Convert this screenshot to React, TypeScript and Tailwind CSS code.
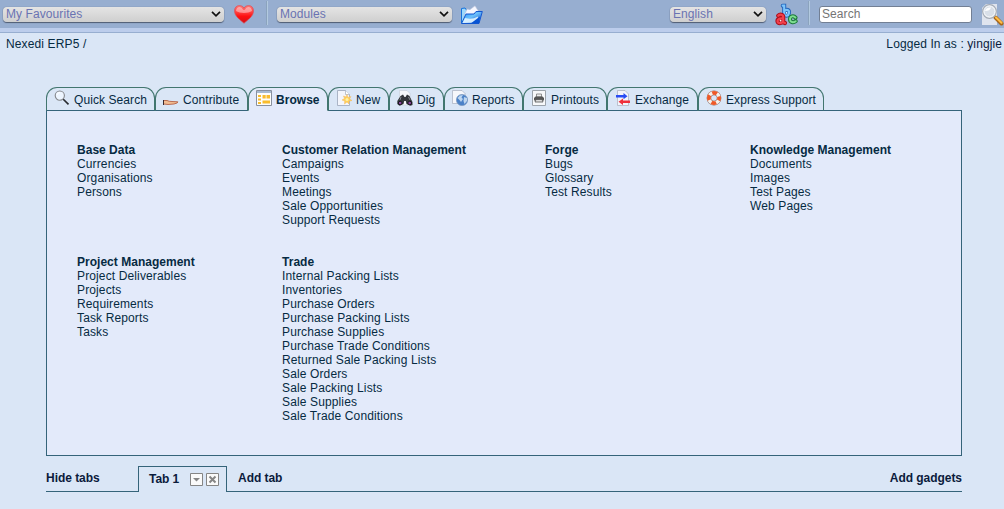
import React from "react";

type Tab = { label: string; width: string; textPad: string; icon: React.ReactNode; active?: boolean };

const Chevron = () => (
  <svg width="10" height="6" viewBox="0 0 10 6" className="shrink-0">
    <path d="M1 .8L5 4.8L9 .8" fill="none" stroke="#111" strokeWidth="1.7" />
  </svg>
);

function Select({ label, className }: { label: string; className: string }) {
  return (
    <div className={`${className} flex h-[15px] shrink-0 items-center justify-between rounded-[4px] bg-gradient-to-b from-[#e4e4e4] to-[#cfcfcf] pr-[3px] pl-[3px] text-[#6a73b2] shadow-[0_1px_1px_#4f5c72,0_0_1px_#5d6a80]`}>
      <span className="leading-[14px]">{label}</span>
      <Chevron />
    </div>
  );
}

const Divider = ({ className }: { className: string }) => (
  <div className={`${className} h-[24px] w-[2px] shrink-0 border-l border-[#8ba3bd] bg-[#b3cae0]`} />
);

const Heart = () => (
  <svg width="20" height="19" viewBox="0 0 20 19" className="shrink-0">
    <defs>
      <linearGradient id="heart" x1="0" y1="0" x2="0" y2="1">
        <stop offset="0" stopColor="#ff7a7a" />
        <stop offset=".4" stopColor="#ff3a3a" />
        <stop offset=".6" stopColor="#ff1010" />
        <stop offset="1" stopColor="#cf1018" />
      </linearGradient>
    </defs>
    <path d="M10 18.3C6.500 15 .5 11.500 .5 5.800C.5 2.500 2.800 .6 5.300 .6C7.500 .6 9.200 1.500 10 3C10.800 1.500 12.500 .6 14.700 .6C17.200 .6 19.500 2.500 19.500 5.800C19.500 11.500 13.500 15 10 18.300Z" fill="url(#heart)" stroke="#d9505a" strokeWidth=".7" />
    <path d="M2 6C2.500 1 7 .8 8.800 4.200Q10 5.800 11.200 4.200C13 .8 17.500 1 18 6C14 8.500 6 8.500 2 6Z" fill="#fff" opacity=".42" />
  </svg>
);

const Folder = () => (
  <svg width="23" height="20" viewBox="0 0 23 20" className="shrink-0">
    <defs>
      <linearGradient id="folder" x1="0" y1="0" x2="1" y2="1">
        <stop offset="0" stopColor="#1c8df5" />
        <stop offset=".45" stopColor="#6cc0fb" />
        <stop offset="1" stopColor="#0643cb" />
      </linearGradient>
    </defs>
    <path d="M1.500 3.500L5 3L6.500 5H16V18H1.500Z" fill="#9ed8fb" stroke="#1773db" />
    <path d="M5 9L7 4L10 4.500L15 .8L19 7L15 12H4Z" fill="#f6f7ff" stroke="#b6bfd8" strokeWidth=".6" />
    <path d="M1.500 18.500L6 9H14L16 6.500H22.300L19 18.500Z" fill="url(#folder)" stroke="#1457cf" />
    <path d="M2.500 18L5 13Q12 15 18 11.500L17.500 17.500Z" fill="#e4f5ff" opacity=".9" />
    <path d="M11 18.300L20 11.500L18.800 18.300Z" fill="#0753d4" />
  </svg>
);

const letterB = "M7.700 2.700H9.200V11.500M9.200 8.300C11.500 5.500 14.500 7 14 10C13.500 13 10.500 13.500 9.200 11.500";
const letterA = "M3.200 12.800C5 11 8.200 11.300 8.200 14V19.300L10 20M8.200 15.500C4.500 15 2.300 16.300 2.500 18.300C3 20.800 6.500 20.500 8.200 18.500";
const letterC = "M20.500 14.600C18.500 12.200 15 13.200 15 16.200C15 19.200 18.300 20 20.700 18.200";

const Letters = () => (
  <svg width="23" height="23" viewBox="0 0 23 23" fill="none" strokeLinecap="round" className="shrink-0">
    <path d={letterB} stroke="#2162b8" strokeWidth="4" />
    <path d={letterB} stroke="#7cc4fb" strokeWidth="2.200" />
    <path d={letterA} stroke="#ad0f1c" strokeWidth="4.200" />
    <path d={letterA} stroke="#f2404b" strokeWidth="2.200" />
    <path d={letterC} stroke="#1a7a38" strokeWidth="4" />
    <path d={letterC} stroke="#7fdd92" strokeWidth="2" />
    <circle cx="5.600" cy="17.600" r=".9" fill="#fbe3e8" />
    <circle cx="11.600" cy="9.900" r=".8" fill="#e4f2ff" />
  </svg>
);

const PageSearch = () => (
  <svg width="23" height="23" viewBox="0 0 23 23" className="shrink-0">
    <path d="M1 5L5 1H16V22H1Z" fill="#dfe4ee" />
    <path d="M14.500 14.500L20.500 20.500" stroke="#a76519" strokeWidth="4" strokeLinecap="round" />
    <path d="M15 14.500L20.500 19.700" stroke="#ffbd45" strokeWidth="2.200" strokeLinecap="round" />
    <circle cx="8.500" cy="8.500" r="6.800" fill="#e7ecf2" stroke="#a4abb5" strokeWidth="1.200" />
    <circle cx="8.500" cy="8.500" r="5.400" fill="#d8dfe8" stroke="#f4f6f8" />
    <path d="M4 8Q5 4 10 4.500Q9 8 4 8Z" fill="#fff" />
  </svg>
);

const tabs: Tab[] = [
  {
    label: "Quick Search", width: "w-[109px]", textPad: "pl-[4px]",
    icon: <>
      <path d="M9 9L14.500 14.300" stroke="#282b30" strokeWidth="1.700" />
      <circle cx="5.800" cy="5.600" r="4.600" fill="#edf5ff" stroke="#85878b" strokeWidth="1.100" />
      <path d="M3 5Q3.500 2.500 6 2.500" stroke="#fff" fill="none" />
    </>,
  },
  {
    label: "Contribute", width: "w-[93px]", textPad: "pl-[4px]",
    icon: <>
      <path d="M.5 10.500H4Q6 11.500 9 11.500L14.800 11.800Q15.500 13 11 14L5 14.500L.5 14Z" fill="#f1bc92" stroke="#ad5336" strokeWidth=".8" />
      <path d="M.4 10V15" stroke="#36272c" strokeWidth="1.200" />
    </>,
  },
  {
    label: "Browse", width: "w-[80px]", textPad: "pl-[4px]", active: true,
    icon: <>
      <path d="M.5 .5H15.500V15.500H.5Z" fill="#fdfdfb" stroke="#88909e" />
      <path d="M1 1H15V3H1Z" fill="#a7bad0" />
      <path d="M2 5H5V7H2ZM2 8.500H5V10.500H2ZM2 12H5V14H2ZM6.500 5H9.700V8.500H6.500ZM10.500 5H14V8.500H10.500ZM6.500 10.500H14V13.500H6.500Z" fill="#f8bc2d" />
    </>,
  },
  {
    label: "New", width: "w-[61px]", textPad: "pl-[4px]",
    icon: <>
      <path d="M1.500 .5H9.500L13.500 4.500V15.500H1.500Z" fill="#f3f5fc" stroke="#9ba5b9" strokeWidth=".8" />
      <path d="M9.500 .5V4.500H13.500" fill="#fff" stroke="#a4acbb" strokeWidth=".7" />
      <path d="M11 4.500L12 7.500L15 6.500L13.500 9L16 10.500L13 11.200L13 14L11 12L8.500 14L8.700 11L6 10L8.500 8.500L7.500 6L10 7Z" fill="#ffd05b" stroke="#f2b960" strokeWidth=".5" />
      <circle cx="11" cy="9.500" r="1.500" fill="#fff1a4" />
    </>,
  },
  {
    label: "Dig", width: "w-[55px]", textPad: "pl-[4px]",
    icon: <>
      <path d="M2.500 .5H10L13 3.500V15H2.500Z" fill="#f6f7fb" stroke="#c5cbd7" strokeWidth=".6" />
      <path d="M3.500 6L6 4.500L7.500 7H8.500L10 4.500L12.500 6L15.500 12V15L13.500 15.800L9.500 14L8.800 11H7.200L6.500 14L2.500 15.800L.3 14V11Z" fill="#34363c" />
      <ellipse cx="3.200" cy="13" rx="1.900" ry="1.700" fill="#8b45a0" stroke="#17171b" />
      <ellipse cx="12.700" cy="13" rx="1.900" ry="1.700" fill="#8b45a0" stroke="#17171b" />
      <path d="M4 7L3 10M11.500 7L13 10" stroke="#83868e" />
    </>,
  },
  {
    label: "Reports", width: "w-[79px]", textPad: "pl-[4px]",
    icon: <>
      <path d="M.5 .5H10L13 3.500V13.500H.5Z" fill="#f6f7fb" stroke="#a8afbe" strokeWidth=".7" />
      <circle cx="10" cy="10" r="5.600" fill="#4b82c8" stroke="#7896bf" strokeWidth=".7" />
      <path d="M5.500 8L8 5.500L11 5L9.500 7.500L11 9L9 12L7.500 10ZM12 7L15 8V11L12.500 14L11.500 11Z" fill="#bed6ef" />
    </>,
  },
  {
    label: "Printouts", width: "w-[84px]", textPad: "pl-[4px]",
    icon: <>
      <path d="M1.500 .5H14.500V15.500H1.500Z" fill="#f7f8fa" stroke="#9ca3ab" />
      <path d="M5.500 4H10.500V7H5.500Z" fill="#eee" stroke="#777" strokeWidth=".8" />
      <path d="M3 8L4.500 6.500H11.500L13 8V10.500H3Z" fill="#555" />
      <path d="M5 9.500H11L12 12H4Z" fill="#ddd" stroke="#555" strokeWidth=".8" />
    </>,
  },
  {
    label: "Exchange", width: "w-[91px]", textPad: "pl-[4px]",
    icon: <>
      <path d="M2.500 .5H10L13.500 4V15.500H2.500Z" fill="#f3f4fb" stroke="#a7adbc" strokeWidth=".7" />
      <path d="M1 5H8.500V3L12.500 6.200L8.500 9.200V7.500H1Z" fill="#294cf4" />
      <path d="M15 10.500H8V8.500L3.500 11.800L8 15V13H15Z" fill="#ef303b" />
    </>,
  },
  {
    label: "Express Support", width: "w-[126px]", textPad: "pl-[4px]",
    icon: <>
      <circle cx="8" cy="8" r="5.100" fill="none" stroke="#8d6b65" strokeWidth="4.600" />
      <circle cx="8" cy="8" r="5.100" fill="none" stroke="#f5f1ec" strokeWidth="3.600" />
      <circle cx="8" cy="8" r="5.100" fill="none" stroke="#ee5928" strokeWidth="3.800" strokeDasharray="4.800 3.211" strokeDashoffset="2.400" />
    </>,
  },
];

type Group = { title: string; items: string[] };
const rows: Group[][] = [
  [
    { title: "Base Data", items: ["Currencies", "Organisations", "Persons"] },
    { title: "Customer Relation Management", items: ["Campaigns", "Events", "Meetings", "Sale Opportunities", "Support Requests"] },
    { title: "Forge", items: ["Bugs", "Glossary", "Test Results"] },
    { title: "Knowledge Management", items: ["Documents", "Images", "Test Pages", "Web Pages"] },
  ],
  [
    { title: "Project Management", items: ["Project Deliverables", "Projects", "Requirements", "Task Reports", "Tasks"] },
    {
      title: "Trade",
      items: ["Internal Packing Lists", "Inventories", "Purchase Orders", "Purchase Packing Lists", "Purchase Supplies", "Purchase Trade Conditions", "Returned Sale Packing Lists", "Sale Orders", "Sale Packing Lists", "Sale Supplies", "Sale Trade Conditions"],
    },
  ],
];

export default function App() {
  return (
    <div className="h-[509px] w-[1004px] overflow-hidden bg-[#dae6f6] font-['Liberation_Sans',Arial,sans-serif] text-[12px] leading-[14px] tracking-[0.13px] whitespace-nowrap text-[#062a42]">
      <header className="flex h-[33px] items-start border-b border-[#97aed0] bg-[#bccdec]">
        <div className="flex h-[28px] w-full items-center bg-[#97aed0] tracking-[0.08px]">
          <Select label="My Favourites" className="ml-[3px] w-[221px]" />
          <div className="ml-[10px]"><Heart /></div>
          <Divider className="mb-[2px] ml-[12px]" />
          <Select label="Modules" className="ml-[9px] w-[175px]" />
          <div className="mt-[2px] ml-[8px]"><Folder /></div>
          <Select label="English" className="ml-[187px] w-[96px]" />
          <div className="ml-[9px]"><Letters /></div>
          <Divider className="mb-[2px] ml-[10px]" />
          <input aria-label="Search" placeholder="Search" className="ml-[9px] h-[17px] w-[153px] shrink-0 rounded-[3px] border border-[#727f94] bg-white px-[2px] text-[12px] leading-[14px] placeholder:text-[#757575]" />
          <div className="ml-[9px]"><PageSearch /></div>
        </div>
      </header>

      <div className="flex h-[54px] justify-between pt-[4px] pr-[2px] pl-[6px]">
        <span>Nexedi ERP5 /</span>
        <span className="tracking-[0.1px]">Logged In as : <span className="text-[#0b1b3c]">yingjie</span></span>
      </div>

      <main className="ml-[46px] w-[916px]">
        <nav className="flex h-[24px] tracking-[0.08px]">
          {tabs.map((t) => (
            <div
              key={t.label}
              className={`${t.width} flex shrink-0 items-start rounded-t-[11px] border border-[#42766f] pt-[2px] pl-[7px] ${t.active ? "border-b-[#e3eafa] bg-[#e3eafa] font-bold tracking-[0.04px]" : "border-b-[#35647a] bg-[#dae6f6]"}`}
            >
              <svg width="16" height="16" viewBox="0 0 16 16" className="shrink-0">{t.icon}</svg>
              <span className={`${t.textPad} pt-[3px]`}>{t.label}</span>
            </div>
          ))}
          <div className="grow border-b border-[#35647a]" />
        </nav>

        <section className="flex h-[345px] flex-col gap-[28px] border-x border-b border-[#35647a] bg-[#e3eafa] pt-[32px] pl-[30px]">
          {rows.map((row, i) => (
            <div key={i} className="grid grid-cols-[205px_263px_205px_1fr]">
              {row.map((g) => (
                <div key={g.title}>
                  <h2 className="font-bold tracking-[0.02px]">{g.title}</h2>
                  <ul>{g.items.map((item) => <li key={item}>{item}</li>)}</ul>
                </div>
              ))}
            </div>
          ))}
        </section>

        <footer className="mt-[10px] flex h-[26px] font-bold tracking-[-0.04px] text-[#0b1b3c]">
          <div className="w-[92px] border-b border-[#35647a] pt-[5px]">Hide tabs</div>
          <div className="flex w-[89px] items-start border-x border-t border-[#35647a] pl-[10px]">
            <span className="w-[41px] pt-[5px]">Tab 1</span>
            <svg width="29" height="13" viewBox="0 0 29 13" className="mt-[6px] shrink-0">
              <path d="M.5 .5H12.500V12.500H.5ZM16.500 .5H28.500V12.500H16.500Z" fill="#fafafa" stroke="#858585" />
              <path d="M3 5H10L6.500 8.500Z" fill="#858585" />
              <path d="M19.500 3.500L25.500 9.500M25.500 3.500L19.500 9.500" stroke="#858585" strokeWidth="2" />
            </svg>
          </div>
          <div className="flex grow justify-between border-b border-[#35647a] pt-[5px] pl-[11px]">
            <span>Add tab</span>
            <span>Add gadgets</span>
          </div>
        </footer>
      </main>
    </div>
  );
}
